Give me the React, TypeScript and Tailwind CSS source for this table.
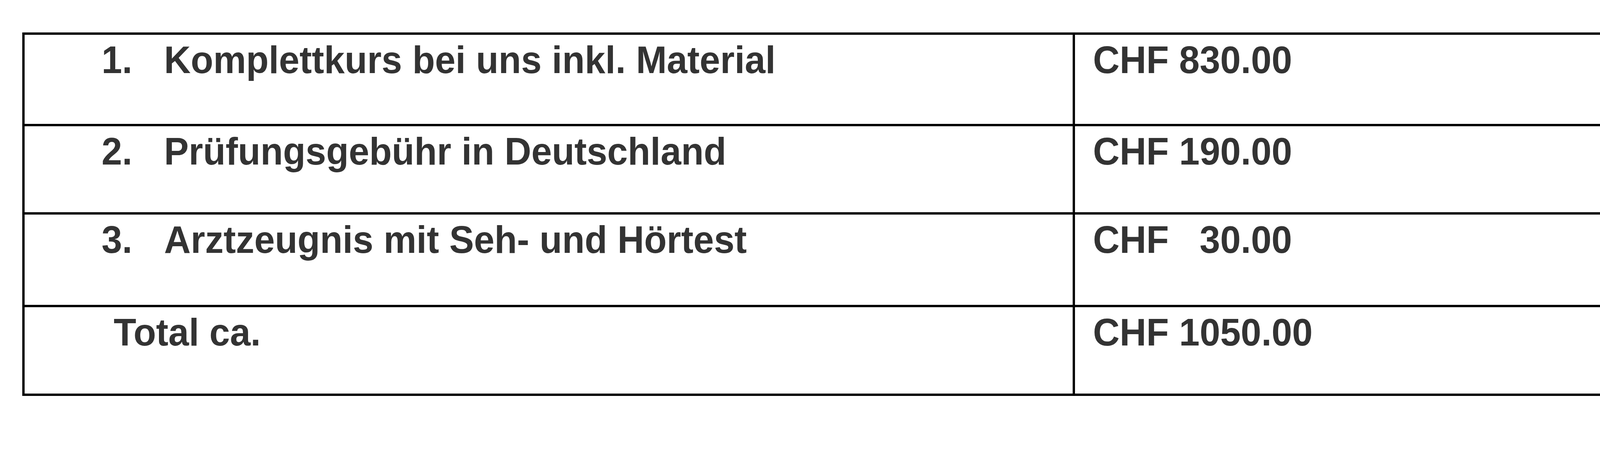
const rows = [
  { num: "1.", label: "Komplettkurs bei uns inkl. Material", price: "CHF 830.00", h: "h-[234px]" },
  { num: "2.", label: "Prüfungsgebühr in Deutschland", price: "CHF 190.00", h: "h-[226px]" },
  { num: "3.", label: "Arztzeugnis mit Seh- und Hörtest", price: "CHF   30.00", h: "h-[237px]" },
  { num: "", label: "Total ca.", price: "CHF 1050.00", h: "h-[221px]" },
];

// the source text is slightly condensed, so squeeze each run horizontally
function Txt({ children }: { children: string }) {
  return <span className="inline-block origin-left scale-x-[0.955] whitespace-pre">{children}</span>;
}

export default function App() {
  return (
    <main className="min-h-[1200px] w-[4234px] bg-white pl-[57px] pt-[83px] font-['Liberation_Sans',Arial,sans-serif] text-[99px] font-bold leading-[1.15] text-[#333333]">
      <div className="w-[4101px] border-[6px] border-black">
        {rows.map((row, i) => (
          <div
            key={i}
            className={`grid grid-cols-[2689px_1fr] ${row.h} ${i < rows.length - 1 ? "border-b-[6px] border-black" : ""}`}
          >
            <div className="flex border-r-[6px] border-black pt-[7px]">
              {row.num ? (
                <>
                  <span className="w-[357px] shrink-0 pl-[197px]">
                    <Txt>{row.num}</Txt>
                  </span>
                  <Txt>{row.label}</Txt>
                </>
              ) : (
                <span className="pl-[228px]">
                  <Txt>{row.label}</Txt>
                </span>
              )}
            </div>
            <div className="pl-[46px] pt-[7px]">
              <Txt>{row.price}</Txt>
            </div>
          </div>
        ))}
      </div>
    </main>
  );
}
